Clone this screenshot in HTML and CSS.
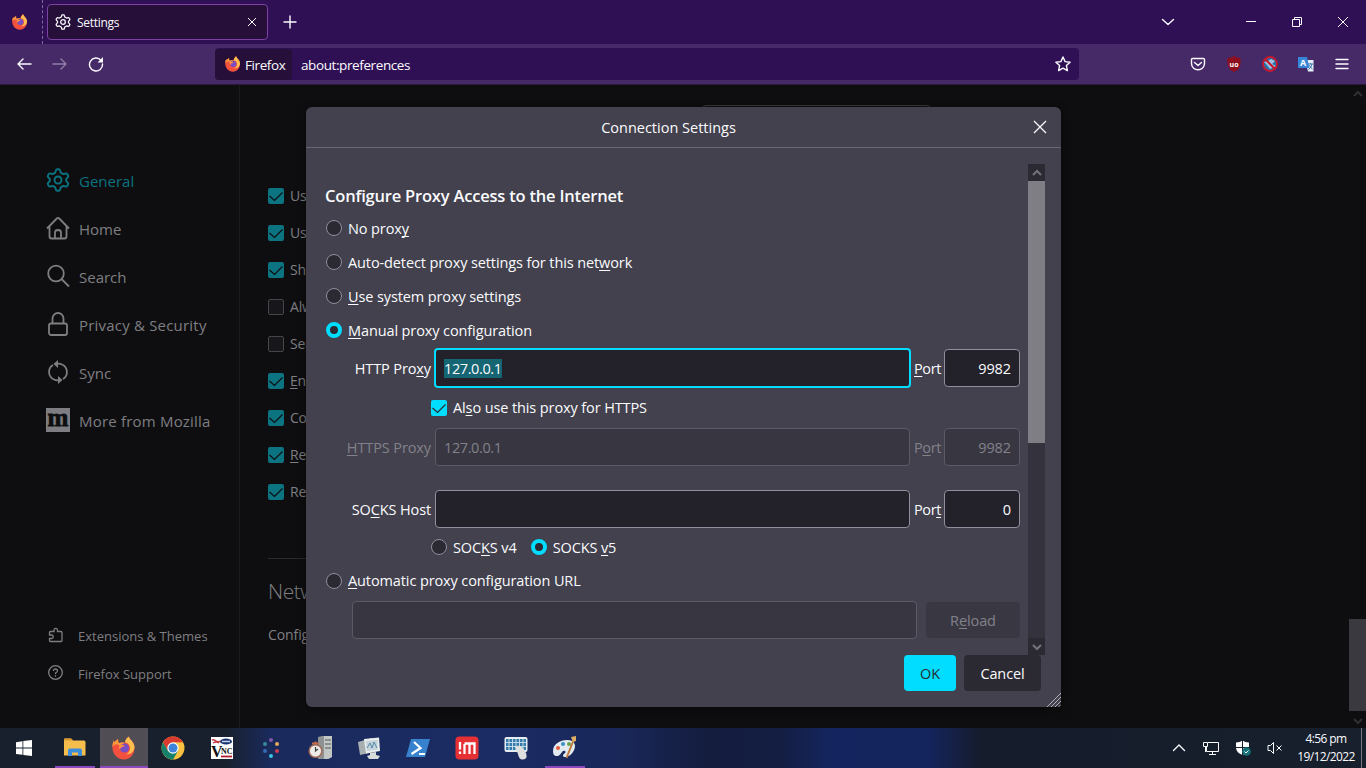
FILE: index.html
```html
<!DOCTYPE html>
<html lang="en">
<head>
<meta charset="UTF-8">
<meta name="viewport" content="width=device-width, initial-scale=1.0">
<title>Settings</title>
<link rel="stylesheet" href="styles.css">
</head>
<body>
<svg class="defs" aria-hidden="true">
    <symbol id="firefox" viewBox="0 0 24 24">
        <path d="M22.500 11c0-3-2-5-3-6.500C18 3 17 2 17 .5c-2.500 1.500-4 4-4 6L7 7C6 5.500 6 4.500 6.200 3 4.500 3.700 3.500 5 2.700 6.200 2 5.800 2 5 2 4 .5 7 0 10 .5 13 1.500 19 6 23.500 12 23.500S23 18 22.500 11z" fill="#f4503e"/>
        <path d="M17 .5c-2.500 1.500-4 4-4 6 3.500.5 5 3 5 6 0 3-2 5-4 6 5 0 8.500-3 8.500-7.500 0-3-2-5-3-6.500C18 3 17 2 17 .5z" fill="#fdbe50"/>
        <path d="M6.200 3C4.500 3.700 3.500 5 2.700 6.200 2 5.800 2 5 2 4 1 6.500.5 8.500.5 11 3 7 6 8 8 10l5-1.500L11 6 7 7C6 5.500 6 4.500 6.200 3z" fill="#fb9a3c"/>
        <circle cx="12.500" cy="12" r="4.600" fill="#7a4ec2"/>
        <path d="M7 10c2-2 4.500-1.500 5.500-.5-1.500 2-4 1.500-4.500 4C7 12.500 6.500 11.500 7 10z" fill="#ff8b40"/>
    </symbol>
    <symbol id="gear" viewBox="0 0 24 24">
        <path d="M9.300 4.600 10 2.200Q10.200 1.200 11.200 1.200h1.600Q13.800 1.200 14 2.200l.7 2.400 2.600 1.500 2.400-.6q1-.3 1.500.6l.9 1.500q.5.900-.2 1.600L20.200 11v2l1.700 1.800q.7.700.2 1.600l-.9 1.500q-.5.900-1.500.6l-2.400-.6-2.600 1.500-.7 2.400q-.2 1-1.200 1h-1.600q-1 0-1.200-1l-.7-2.400-2.600-1.500-2.400.6q-1 .3-1.500-.6l-.9-1.500q-.5-.9.200-1.600L3.800 13v-2L2.100 9.200q-.7-.7-.2-1.600l.9-1.500q.5-.9 1.500-.6l2.400.6z" fill="none" stroke="currentColor" stroke-width="1.900" stroke-linejoin="round"/>
        <circle cx="12" cy="12" r="3.500" fill="none" stroke="currentColor" stroke-width="1.900"/>
    </symbol>
    <symbol id="check" viewBox="0 0 16 16">
        <path d="M1.500 8 6.500 12.500 14.500 4.500" fill="none" stroke="currentColor" stroke-width="1.200"/>
    </symbol>
    <symbol id="up" viewBox="0 0 12 12">
        <path d="M2 8 6 4 10 8" fill="none" stroke="currentColor" stroke-width="2"/>
    </symbol>
    <symbol id="down" viewBox="0 0 12 12">
        <path d="M2 4 6 8 10 4" fill="none" stroke="currentColor" stroke-width="2"/>
    </symbol>
</svg>

<div class="window">
    <div class="tabbar">
        <div class="view"><svg class="i16"><use href="#firefox"/></svg></div>
        <div class="tab">
            <svg class="i16"><use href="#gear"/></svg>
            <span class="tab-title">Settings</span>
            <svg class="tab-close" viewBox="0 0 10 10"><path d="M1 1 9 9M9 1 1 9" class="line"/></svg>
        </div>
        <svg class="newtab" viewBox="0 0 14 14"><path d="M7 1V13M1 7H13" class="line thick"/></svg>
        <svg class="alltabs" viewBox="0 0 14 14"><path d="M1.500 4.500 7 9.500 12.500 4.500" class="line thick"/></svg>
        <div class="controls">
            <svg viewBox="0 0 12 12"><path d="M1 5.500H11" class="line"/></svg>
            <svg viewBox="0 0 12 12"><path d="M1.500 3.500H8.500V10.500H1.500zM3.500 3.500V1.500H10.500V8.500H8.500" class="line"/></svg>
            <svg viewBox="0 0 12 12"><path d="M1 1 11 11M11 1 1 11" class="line"/></svg>
        </div>
    </div>

    <div class="navbar">
        <div class="nav-buttons">
            <svg viewBox="0 0 16 16"><path d="M15 8H2M7 3 2 8 7 13" class="line thick"/></svg>
            <svg viewBox="0 0 16 16" class="off"><path d="M1 8H14M9 3 14 8 9 13" class="line thick"/></svg>
            <svg viewBox="0 0 16 16"><path d="M13 4.300A6.500 6.500 0 1 0 14.500 8" class="line thick"/><path d="M15 1V6.500H9.500z" fill="currentColor"/></svg>
        </div>
        <div class="urlbar">
            <div class="identity"><svg class="i16"><use href="#firefox"/></svg><span>Firefox</span></div>
            <span class="url">about:preferences</span>
            <svg class="star" viewBox="0 0 16 16"><path d="M8 1 10.100 5.600 15.100 6.200 11.400 9.600 12.400 14.600 8 12.100 3.600 14.600 4.600 9.600.9 6.200 5.900 5.600z" class="line thick"/></svg>
        </div>
        <div class="extensions">
            <svg viewBox="0 0 16 16"><path d="M2.500 2.500H13.500Q14.500 2.500 14.500 3.500V7.500A6.500 6.200 0 0 1 1.500 7.500V3.500Q1.500 2.500 2.500 2.500z" class="line thick"/><path d="M4.500 6.500 8 9.500 11.500 6.500" class="line thick"/></svg>
            <svg viewBox="0 0 16 16"><path d="M8 0Q11 2 14.500 2V8Q14 13 8 16 2 13 1.500 8V2Q5 2 8 0z" fill="#8c101f"/><text x="8" y="10.500" class="ubo">uo</text></svg>
            <svg viewBox="0 0 16 16"><circle cx="8" cy="8" r="7" fill="#286ea9"/><path d="M2 6 6 5 9 3 13 5 10 8 14 10 8 13 5 9z" fill="#9dc6e4"/><circle cx="8" cy="8" r="7" fill="none" stroke="#c9182b" stroke-width="1.800"/><path d="M3 3 13 13" stroke="#c9182b" stroke-width="2"/></svg>
            <svg viewBox="0 0 16 16"><path d="M7 4h8.500v11.500H10z" fill="#e8eef5"/><path d="M0 1H9L11.500 12H0z" fill="#3886d8"/><text x="5" y="9.500" class="tr-a">A</text><path d="M10 8h5M12.500 7V8M14 8Q13 12 10.500 13.500M11.500 9.500Q12.500 12 14.500 13" fill="none" stroke="#3472ad"/></svg>
            <svg viewBox="0 0 16 16"><path d="M2 3.500H14M2 8H14M2 12.500H14" class="line thick"/></svg>
        </div>
    </div>

    <div class="page">
        <nav class="sidebar">
            <ul class="categories">
                <li class="active"><svg><use href="#gear"/></svg><span>General</span></li>
                <li><svg viewBox="0 0 24 24"><path d="M1 12.500 10.800 2.500Q12 1.300 13.200 2.500L23 12.500M3.500 10.500V20.500Q3.500 22.500 5.500 22.500H18.500Q20.500 22.500 20.500 20.500V10.500M9 22V16.500Q9 14 12 14T15 16.500V22" class="line dim"/></svg><span>Home</span></li>
                <li><svg viewBox="0 0 24 24"><circle cx="10" cy="9.500" r="7.800" class="line dim"/><path d="M15.500 15 23 22.500" class="line dim"/></svg><span>Search</span></li>
                <li><svg viewBox="0 0 24 24"><rect x="3" y="11.500" width="18" height="11.500" rx="2" class="line dim"/><path d="M6.500 11V6.500A5.500 5.500 0 0 1 17.500 6.500V11" class="line dim"/></svg><span class="wide">Privacy &amp; Security</span></li>
                <li><svg viewBox="0 0 24 24"><path d="M8 19.500A8.200 8.200 0 0 1 7 5M16 4.500A8.200 8.200 0 0 1 17 19M11 3.800A8.200 8.200 0 0 1 16 4.500M13 20.200A8.200 8.200 0 0 1 8 19.500" class="line dim"/><path d="M12 0V8L7.500 4zM12 24V16L16.500 20z" fill="currentColor"/></svg><span>Sync</span></li>
                <li><svg viewBox="0 0 24 24"><path d="M0 0H24V24H0z" fill="currentColor"/><text x="12" y="18" class="moz">m</text></svg><span class="wide">More from Mozilla</span></li>
            </ul>
            <ul class="links">
                <li><svg viewBox="0 0 16 16"><path d="M1.500 6V5.500Q1.500 4.500 2.500 4.500H6V3.200A1.600 1.600 0 0 1 9.500 3.200V4.500H13Q14 4.500 14 5.500V13.500Q14 14.500 13 14.500H2.500Q1.500 14.500 1.500 13.500V11.500H3.500A1.700 1.700 0 0 0 3.500 8H1.500z" class="line mid"/></svg><span>Extensions &amp; Themes</span></li>
                <li><svg viewBox="0 0 16 16"><circle cx="7.500" cy="7.500" r="6.800" class="line mid"/><path d="M5.500 6Q5.500 4 7.500 4T9.500 6Q9.500 7 7.500 8V9.200M7.500 10.300V11.700" class="line mid"/></svg><span>Firefox Support</span></li>
            </ul>
        </nav>

        <main class="prefs">
            <div class="pref-list">
                <label><i class="box on"><svg><use href="#check"/></svg></i>Use autoscrolling</label>
                <label><i class="box on"><svg><use href="#check"/></svg></i>Use smooth scrolling</label>
                <label><i class="box on"><svg><use href="#check"/></svg></i>Show a touch keyboard</label>
                <label><i class="box"></i>Always use the cursor keys</label>
                <label><i class="box"></i>Search for text</label>
                <label><i class="box on"><svg><use href="#check"/></svg></i><span><u>E</u>nable picture-in-picture</span></label>
                <label><i class="box on"><svg><use href="#check"/></svg></i>Control media</label>
                <label><i class="box on"><svg><use href="#check"/></svg></i><span><u>R</u>ecommend extensions</span></label>
                <label><i class="box on"><svg><use href="#check"/></svg></i>Recommend features</label>
            </div>
            <div class="network">
                <h2>Network Settings</h2>
                <p>Configure how Firefox connects</p>
            </div>
        </main>
        <div class="page-scroll">
            <svg><use href="#up"/></svg>
            <div class="page-thumb"></div>
            <svg><use href="#down"/></svg>
        </div>

        <div class="behind-field"></div>
        <div class="dialog">
            <div class="dialog-head">
                <span class="dialog-title">Connection Settings</span>
                <svg class="dialog-close" viewBox="0 0 14 14"><path d="M1 1 13 13M13 1 1 13" class="line mid"/></svg>
            </div>
            <div class="dialog-body">
                <form class="proxy">
                    <h3>Configure Proxy Access to the Internet</h3>
                    <label class="choice"><i class="radio"></i><span>No prox<u>y</u></span></label>
                    <label class="choice"><i class="radio"></i><span>Auto-detect proxy settings for this net<u>w</u>ork</span></label>
                    <label class="choice"><i class="radio"></i><span><u>U</u>se system proxy settings</span></label>
                    <label class="choice"><i class="radio on"></i><span><u>M</u>anual proxy configuration</span></label>
                    <div class="row http">
                        <span class="name">HTTP Pro<u>x</u>y</span>
                        <div class="field focus"><mark>127.0.0.1</mark></div>
                        <span class="port"><u>P</u>ort</span>
                        <div class="field num">9982</div>
                    </div>
                    <label class="also"><i class="box on"><svg><use href="#check"/></svg></i><span>Al<u>s</u>o use this proxy for HTTPS</span></label>
                    <div class="row off">
                        <span class="name"><u>H</u>TTPS Proxy</span>
                        <div class="field">127.0.0.1</div>
                        <span class="port">P<u>o</u>rt</span>
                        <div class="field num">9982</div>
                    </div>
                    <div class="row socks">
                        <span class="name">SO<u>C</u>KS Host</span>
                        <div class="field"></div>
                        <span class="port">Por<u>t</u></span>
                        <div class="field num">0</div>
                    </div>
                    <div class="versions">
                        <label><i class="radio"></i><span>SOC<u>K</u>S v4</span></label>
                        <label><i class="radio on"></i><span>SOCKS <u>v</u>5</span></label>
                    </div>
                    <label class="choice auto"><i class="radio"></i><span><u>A</u>utomatic proxy configuration URL</span></label>
                    <div class="row off url-row">
                        <div class="field"></div>
                        <div class="reload">R<u>e</u>load</div>
                    </div>
                </form>
                <div class="scroll">
                    <div class="scroll-btn"><svg><use href="#up"/></svg></div>
                    <div class="thumb"></div>
                    <div class="scroll-btn end"><svg><use href="#down"/></svg></div>
                </div>
            </div>
            <div class="dialog-foot">
                <button class="ok">OK</button>
                <button class="cancel">Cancel</button>
            </div>
            <svg class="grip" viewBox="0 0 14 14"><path d="M0 14 14 0M4 14 14 4M8 14 14 8M11.500 14 14 11.500" fill="none" stroke="#b0afb5" stroke-width="1"/></svg>
        </div>
    </div>

    <div class="taskbar">
        <div class="task start"><svg viewBox="0 0 24 24"><path d="M4 6.200 10.500 5.200V11.600H4zM11.300 5.100 20 4V11.600H11.300zM4 12.400H10.500V18.800L4 17.900zM11.300 12.400H20V20L11.300 18.900z" fill="#fff"/></svg></div>
        <div class="task open"><svg viewBox="0 0 24 24"><path d="M1 3.500Q1 2.500 2 2.500H8L10 4.500H21Q22.500 4.500 22.500 6V19.500H1z" fill="#f5bd4c"/><path d="M1 3.500Q1 2.500 2 2.500H8L10 4.500H1z" fill="#d99a2b"/><path d="M5 20V14.500Q5 12.500 7 12.500H17Q19 12.500 19 14.500V20H15V16.500H9V20z" fill="#3c8edb"/></svg></div>
        <div class="task open current"><svg><use href="#firefox"/></svg></div>
        <div class="task"><svg viewBox="0 0 24 24"><circle cx="12" cy="12" r="11.500" fill="#f8c13f"/><path d="M2 6.300A11.500 11.500 0 0 1 22 6.300H12L7 15z" fill="#db3a31"/><path d="M2 6.300A11.500 11.500 0 0 0 12 23.500L17 15H7z" fill="#17806a"/><circle cx="12" cy="12" r="5.700" fill="#fff"/><circle cx="12" cy="12" r="4.500" fill="#3d83d9"/></svg></div>
        <div class="task"><svg viewBox="0 0 24 24"><path d="M1 1H23V23H1z" fill="#fff"/><ellipse cx="16" cy="5.500" rx="6" ry="3" fill="#16316f"/><path d="M12 5.500h8" stroke="#c5d6ee" stroke-width="1.500"/><path d="M2 4Q4 3 6 5T10 5M3 7Q6 5 9 7" fill="none" stroke="#c33642" stroke-width="1.500"/><text x="1" y="20.500" class="vnc-v">V</text><text x="11" y="18" class="vnc-n">NC</text><path d="M11 20.500H22" stroke="#b71c2c" stroke-width="1.800"/></svg></div>
        <div class="task"><svg viewBox="0 0 24 24"><circle cx="12" cy="4" r="2" fill="#8559a9"/><circle cx="18" cy="8" r="2" fill="#e6a95e"/><circle cx="18" cy="15" r="2" fill="#cf3d50"/><circle cx="12" cy="20" r="2" fill="#37c3e4"/><circle cx="6" cy="15" r="2" fill="#356bb6"/><circle cx="6" cy="8" r="2" fill="#398b9c"/></svg></div>
        <div class="task"><svg viewBox="0 0 24 24"><path d="M10 1 14 0H24V21L20 23H10z" fill="#8d9192"/><path d="M16 0H24V21L20 23H16z" fill="#c2c6c5"/><path d="M17 4h6M17 8h6M17 12h6" stroke="#535b5b"/><path d="M4 7.500H11M7.500 5.500V9" stroke="#c36b4a" stroke-width="2"/><circle cx="7.500" cy="15" r="6.300" fill="#ececea" stroke="#a36b57" stroke-width="1.500"/><path d="M7.500 11V15L10 13" fill="none" stroke="#404040" stroke-width="1.200"/></svg></div>
        <div class="task"><svg viewBox="0 0 24 24"><path d="M1 6 15 2 17 16 3 19z" fill="#a8afb1"/><path d="M7 3 22 1.500 23 15 9 17.500z" fill="#e8eceb"/><path d="M9 5 20.500 4V13.500L10 15z" fill="#c2d3da"/><path d="M10 12 13 7 15 12 17 6 20 12" fill="none" stroke="#5789ad"/><path d="M13 17 19 16V19L23 20 21 23H12L10 20 13 19z" fill="#d8ddda"/></svg></div>
        <div class="task"><svg viewBox="0 0 24 24"><path d="M5 3H24L19 21H0z" fill="#3682ce"/><path d="M8 6 14.500 12 5.500 18M13 18H19" fill="none" stroke="#fff" stroke-width="2.200"/></svg></div>
        <div class="task"><svg viewBox="0 0 24 24"><rect x=".5" y=".5" width="23" height="23" rx="4" fill="#e53034"/><path d="M5 6V13.500M5 15.500V18M9.500 18V8M9.500 7.500H19.500V18M14.500 8V18" fill="none" stroke="#fff" stroke-width="2.300"/></svg></div>
        <div class="task"><svg viewBox="0 0 24 24"><rect x=".5" y="1" width="23" height="15" rx="2" fill="#e5edf2"/><path d="M2 3H22V14H2z" fill="#357cad"/><path d="M2 6.500H22M2 10.500H22M5 3V14M8.500 3V14M12 3V14M15.500 3V14M19 3V14" stroke="#d0e2ed" stroke-width=".9"/><path d="M11 11Q15 8 19 12L22 17Q24 23 19 23.500 15 24 14 18z" fill="#dedfde"/></svg></div>
        <div class="task open"><svg viewBox="0 0 24 24"><path d="M0 15C0 8 7 4 14 4 22 4 24 10 20 16 17 21 11 22 10 20 10 17 14 17 12 15 9 13 8 20 4 20 1 20 0 18 0 15z" fill="#e3eaf0"/><circle cx="5" cy="12" r="2" fill="#e35b3a"/><circle cx="10" cy="8" r="2" fill="#3b8fca"/><circle cx="16" cy="8" r="2" fill="#68a44c"/><path d="M21 3 13.500 22" stroke="#c07b3e" stroke-width="2"/><path d="M18 1 23 0V5L20 6z" fill="#dfae62"/></svg></div>
        <div class="tray">
            <svg viewBox="0 0 16 16"><path d="M2.500 10.500 8 5 13.500 10.500" class="line thick"/></svg>
            <svg viewBox="0 0 16 16"><path d="M5 2.500H15.500V11.500H3.500V7M9.500 12V14.500M6 14.500H13M.5 2.500H4.500V6.500H.5zM2.500 6V12" class="line"/></svg>
            <svg viewBox="0 0 16 16"><path d="M7.500.5Q10 2.500 14 2.500V8Q13 13 7.500 15 1.500 13 1 8V2.500Q5 2.500 7.500.5z" fill="#fff"/><path d="M7.500 0V15M1 7.500H14" stroke="#17202c"/><circle cx="11.500" cy="11.500" r="4.300" fill="#17717b"/><path d="M9.500 11.500 11 13 13.500 10.500" class="line"/></svg>
            <svg viewBox="0 0 16 16"><path d="M1 5.500H3.500L6.500 2.500V13.500L3.500 10.500H1zM9.500 5.500 14.500 10.500M14.500 5.500 9.500 10.500" class="line"/></svg>
        </div>
        <div class="clock"><span>4:56 pm</span><span>19/12/2022</span></div>
        <div class="show-desktop"></div>
    </div>
</div>
</body>
</html>
```
FILE: styles.css
```css
* {
    box-sizing: border-box;
}

body {
    margin: 0;
    font-family: "Open Sans", "Noto Sans", sans-serif;
    font-size: 14px;
    color: #fbfbfe;
    background: #0e0e10;
    overflow: hidden;
}

svg {
    display: block;
    flex: none;
}

ul, h2, h3, p {
    margin: 0;
    padding: 0;
    list-style: none;
}

i {
    display: block;
    flex: none;
}

u {
    text-decoration-thickness: 1px;
    text-underline-offset: 2px;
    text-decoration-skip-ink: none;
}

.defs {
    display: none;
}

.i16 {
    width: 16px;
    height: 16px;
}

.line {
    fill: none;
    stroke: currentColor;
    stroke-width: 1;
}

.mid {
    stroke-width: 1.3;
}

.thick {
    stroke-width: 1.4;
    stroke-linecap: round;
    stroke-linejoin: round;
}

.dim {
    stroke-width: 1.8;
}

.window {
    display: flex;
    flex-direction: column;
    width: 1366px;
    height: 768px;
}

/* tab strip */
.tabbar {
    display: flex;
    align-items: center;
    height: 44px;
    background: #2f1055;
}

.view {
    display: flex;
    align-items: center;
    width: 43px;
    height: 44px;
    padding-left: 12px;
    border-right: 1px dashed #7c699a;
}

.tab {
    display: flex;
    align-items: center;
    width: 221px;
    height: 36px;
    margin-left: 4px;
    padding: 0 10px 0 7px;
    border: 1px solid #7b41a3;
    border-radius: 4px;
    background: #261039;
}

.tab-title {
    flex: 1;
    padding-left: 6px;
    font-size: 12px;
    letter-spacing: -0.3px;
}

.tab-close {
    width: 10px;
    height: 10px;
}

.newtab {
    width: 14px;
    height: 14px;
    margin-left: 15px;
}

.alltabs {
    width: 14px;
    height: 14px;
    margin-left: auto;
}

.controls {
    display: flex;
    gap: 34px;
    margin: 0 17px 0 70px;
}

.controls svg {
    width: 12px;
    height: 12px;
}

/* toolbar */
.navbar {
    display: flex;
    align-items: center;
    height: 41px;
    background: #462a68;
    border-bottom: 1px solid #2a1a3c;
}

.nav-buttons {
    display: flex;
    gap: 20px;
    width: 215px;
    padding-left: 16px;
}

.nav-buttons svg,
.extensions svg {
    width: 16px;
    height: 16px;
}

.nav-buttons .off {
    opacity: 0.4;
}

.urlbar {
    display: flex;
    align-items: center;
    width: 864px;
    height: 32px;
    border-radius: 4px;
    background: #2f1055;
    font-size: 13.5px;
}

.identity {
    display: flex;
    align-items: center;
    gap: 4px;
    width: 77px;
    height: 31px;
    padding-left: 10px;
    border-radius: 4px;
    background: #261039;
    letter-spacing: -0.4px;
}

.identity span,
.url {
    padding-top: 1px;
}

.url {
    flex: 1;
    padding-left: 9px;
    letter-spacing: -0.4px;
}

.star {
    width: 16px;
    height: 16px;
    margin-right: 8px;
}

.extensions {
    display: flex;
    gap: 20px;
    margin-left: 111px;
}

.ubo {
    font: bold 7px "Open Sans", sans-serif;
    fill: #fff;
    text-anchor: middle;
}

.tr-a {
    font: bold 9px "Open Sans", sans-serif;
    fill: #fff;
    text-anchor: middle;
}

/* preferences page */
.page {
    position: relative;
    display: flex;
    height: 643px;
    background: #0e0e10;
    color: #7e7e82;
}

.sidebar {
    display: flex;
    flex-direction: column;
    justify-content: space-between;
    width: 240px;
    padding: 72px 0 35px;
    border-right: 1px solid #1b1b1f;
}

.categories li {
    display: flex;
    align-items: center;
    gap: 9px;
    height: 48px;
    padding-left: 46px;
    font-size: 15px;
}

.categories svg {
    width: 24px;
    height: 24px;
    margin-top: -2px;
}

.categories .active {
    color: #0c7380;
}

.categories .wide {
    letter-spacing: 0.2px;
}

.moz {
    font: bold 25px "Liberation Serif", serif;
    fill: #0e0e10;
    stroke: #0e0e10;
    stroke-width: 0.8;
    text-anchor: middle;
}

.links li {
    display: flex;
    align-items: center;
    gap: 14px;
    height: 38px;
    padding-left: 48px;
    font-size: 13px;
}

.links svg {
    width: 16px;
    height: 16px;
    margin-top: -2px;
}

.prefs {
    flex: 1;
    padding: 92px 0 0 28px;
    white-space: nowrap;
    overflow: hidden;
}

.pref-list label {
    display: flex;
    align-items: center;
    gap: 6px;
    height: 37px;
    letter-spacing: -0.2px;
}

.box {
    width: 16px;
    height: 16px;
    border: 1px solid #45454a;
    border-radius: 2px;
    background: #17171b;
}

.box.on {
    border: 0;
    background: #0c7380;
    color: #0e0e10;
}

.box svg {
    width: 16px;
    height: 16px;
}

.network {
    margin-top: 48px;
    width: 664px;
    padding-top: 17px;
    border-top: 1px solid #2a2a2e;
}

.network h2 {
    font-size: 21px;
    font-weight: 300;
    line-height: 30px;
    letter-spacing: -0.5px;
}

.network p {
    margin-top: 19px;
    line-height: 20px;
    letter-spacing: -0.1px;
}

.page-scroll {
    display: flex;
    flex-direction: column;
    align-items: center;
    width: 17px;
    padding: 3px 0 1px;
    color: #2f2f34;
}

.page-scroll svg {
    width: 12px;
    height: 12px;
}

.page-thumb {
    width: 17px;
    height: 92px;
    margin: auto 0 4px;
    background: #3a3940;
}

.behind-field {
    position: absolute;
    left: 702px;
    top: 20px;
    width: 229px;
    height: 30px;
    border: 1px solid #3a3a3f;
    border-radius: 4px;
}

/* connection dialog */
.dialog {
    position: absolute;
    left: 306px;
    top: 22px;
    width: 755px;
    height: 600px;
    border-radius: 6px;
    background: #42414d;
    color: #fbfbfe;
    box-shadow: 0 2px 8px rgba(0, 0, 0, 0.5);
    font-size: 14.5px;
    letter-spacing: -0.11px;
    white-space: nowrap;
}

.dialog-head {
    display: flex;
    align-items: center;
    height: 41px;
    padding-right: 14px;
    border-bottom: 1px solid #68676f;
}

.dialog-title {
    flex: 1;
    text-align: center;
    text-indent: -2px;
    letter-spacing: 0;
}

.dialog-close {
    width: 14px;
    height: 14px;
}

.dialog-body {
    display: flex;
    height: 507px;
    padding: 16px 16px 0 20px;
}

.proxy {
    width: 694px;
    margin-right: 8px;
}

.proxy h3 {
    height: 47px;
    margin-left: -1px;
    padding-top: 20px;
    font-size: 16.5px;
    font-weight: 600;
    line-height: 24px;
    letter-spacing: -0.2px;
}

.choice {
    display: flex;
    align-items: center;
    gap: 6px;
    height: 34px;
}

.radio {
    width: 16px;
    height: 16px;
    border: 1px solid #8f8f9d;
    border-radius: 50%;
    background: #2b2a33;
}

.radio.on {
    border: 4px solid #00ddff;
}

.row {
    display: flex;
    align-items: center;
    height: 38px;
}

.http {
    margin-top: 2px;
}

.name {
    width: 105px;
    text-align: right;
}

.field {
    display: flex;
    align-items: center;
    flex: none;
    width: 475px;
    height: 38px;
    margin-left: 4px;
    padding: 0 8px;
    border: 1px solid #8f8f9d;
    border-radius: 4px;
    background: #23222b;
    letter-spacing: -0.4px;
}

.field.focus {
    width: 477px;
    height: 40px;
    margin: 0 -1px 0 3px;
    border: 2px solid #00ddff;
}

.field mark {
    color: #fbfbfe;
    background: #156572;
}

.port {
    flex: none;
    width: 34px;
    padding-left: 4px;
    letter-spacing: -0.4px;
}

.field.num {
    justify-content: flex-end;
    width: 76px;
    margin-left: 0;
    letter-spacing: -0.1px;
}

.row.off {
    color: #82818a;
}

.row.off .field {
    border-color: #5b5a65;
    background: #383741;
}

.also {
    display: flex;
    align-items: center;
    gap: 6px;
    height: 41px;
    padding-left: 105px;
}

.also .box {
    background: #00ddff;
    color: #2b2a33;
}

.socks {
    margin-top: 24px;
}

.versions {
    display: flex;
    gap: 14px;
    height: 38px;
    padding-left: 105px;
}

.versions label {
    display: flex;
    align-items: center;
    gap: 6px;
}

.auto {
    height: 29px;
}

.url-row {
    margin: 6px 0 0 22px;
}

.url-row .field {
    width: 565px;
}

.reload {
    width: 95px;
    height: 36px;
    margin-left: 9px;
    border-radius: 4px;
    background: #393842;
    line-height: 37px;
    text-align: center;
}

.scroll {
    display: flex;
    flex-direction: column;
    width: 17px;
    height: 491px;
    background: #34333d;
}

.scroll-btn {
    display: flex;
    align-items: center;
    justify-content: center;
    height: 17px;
    background: #2b2a33;
    color: #74737c;
}

.scroll-btn svg {
    width: 12px;
    height: 12px;
}

.scroll-btn.end {
    margin-top: auto;
}

.thumb {
    height: 262px;
    background: #7f7e84;
}

.dialog-foot {
    display: flex;
    justify-content: flex-end;
    gap: 8px;
    padding-right: 20px;
}

.dialog-foot button {
    width: 77px;
    height: 36px;
    padding: 0;
    border: 0;
    border-radius: 4px;
    background: #2b2a33;
    color: #fbfbfe;
    font: 500 14.5px "Open Sans", sans-serif;
    letter-spacing: -0.1px;
}

.dialog-foot .ok {
    width: 52px;
    background: #00ddff;
    color: #2b2a33;
}

.grip {
    position: absolute;
    right: 0;
    bottom: 0;
    width: 14px;
    height: 14px;
}

/* taskbar */
.taskbar {
    display: flex;
    height: 40px;
    background: linear-gradient(90deg, #17202c 0, #18202d 225px, #1a2a5c 270px, #1b2c64 500px, #192759 620px, #141d3e 710px, #141e42 780px, #14245e 830px, #14245c 930px, #151c2c 980px, #17202c 1366px);
}

.task {
    display: flex;
    align-items: center;
    justify-content: center;
    width: 48px;
    margin-right: 1px;
}

.task svg {
    width: 24px;
    height: 24px;
}

.task.start {
    margin-right: 3px;
}

.task.open {
    background: linear-gradient(#8c48bd, #8c48bd) bottom / 40px 2px no-repeat;
}

.task.current {
    background: linear-gradient(#8c48bd, #8c48bd) bottom / 48px 2px no-repeat, #504d55;
}

.vnc-v {
    font: bold 16px "Liberation Serif", serif;
    fill: #111;
}

.vnc-n {
    font: bold 8px "Liberation Serif", serif;
    fill: #111;
}

.tray {
    display: flex;
    align-items: center;
    gap: 16px;
    margin-left: auto;
}

.tray svg {
    width: 16px;
    height: 16px;
}

.clock {
    display: flex;
    flex-direction: column;
    width: 73px;
    margin: 2px 0 0 4px;
    padding-left: 5px;
    font-size: 12px;
    line-height: 18px;
    text-align: center;
    letter-spacing: -0.6px;
}

.show-desktop {
    width: 5px;
    margin-left: 1px;
    border-left: 1px solid #747980;
}
```
